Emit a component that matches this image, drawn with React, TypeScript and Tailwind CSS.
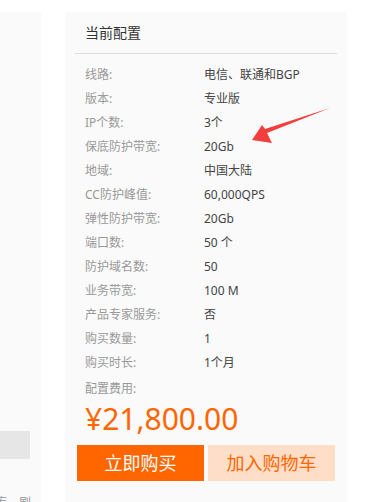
import React from "react";

const specs: { label: string; value: string }[] = [
  { label: "线路:", value: "电信、联通和BGP" },
  { label: "版本:", value: "专业版" },
  { label: "IP个数:", value: "3个" },
  { label: "保底防护带宽:", value: "20Gb" },
  { label: "地域:", value: "中国大陆" },
  { label: "CC防护峰值:", value: "60,000QPS" },
  { label: "弹性防护带宽:", value: "20Gb" },
  { label: "端口数:", value: "50 个" },
  { label: "防护域名数:", value: "50" },
  { label: "业务带宽:", value: "100 M" },
  { label: "产品专家服务:", value: "否" },
  { label: "购买数量:", value: "1" },
  { label: "购买时长:", value: "1个月" },
];

export default function App() {
  return (
    <div
      className="relative w-[382px] h-[502px] overflow-hidden bg-white flex gap-[24px] pt-[12px]"
      style={{ fontFamily: '"Noto Sans", "Noto Sans CJK SC", sans-serif' }}
    >
      {/* left column (cut off) */}
      <div className="w-[41px] shrink-0 bg-[#fafafa] flex flex-col overflow-hidden">
        <div className="shrink-0 mt-[419px] w-[30px] h-[28px] bg-[#e6e6e6]" />
        <div className="shrink-0 mt-[36px] -ml-[5px] whitespace-nowrap text-[12px] leading-[16px] text-[#999]">
          库，刷
        </div>
      </div>

      {/* order summary */}
      <div className="w-[282px] shrink-0 bg-[#fafafa] flex flex-col">
        <div className="px-[20px] pt-[10px] h-[41px] text-[14px] leading-[22px] text-[#333]">
          当前配置
        </div>
        <div className="mx-[10px] h-px bg-[#dddddd]" />

        <div className="mt-[9px] flex flex-col px-[20px]">
          {specs.map((s) => (
            <div key={s.label} className="flex h-[24px] items-center text-[12px]">
              <span className="w-[119px] text-[#999]">{s.label}</span>
              <span className="text-[#444]">{s.value}</span>
            </div>
          ))}
          <div className="mt-[2px] flex h-[24px] items-center text-[12px] text-[#999]">
            配置费用:
          </div>
          <div className="h-[36px] leading-[36px] text-[30px] text-[#ff6600]">
            ¥21,800.00
          </div>
        </div>

        <div className="mt-[8px] px-[12px] flex gap-[4px]">
          <button className="w-[127px] h-[36px] bg-[#ff6600] text-white text-[18px]">
            立即购买
          </button>
          <button className="w-[127px] h-[36px] bg-[#ffdec8] text-[#ff6600] text-[18px]">
            加入购物车
          </button>
        </div>
      </div>

      {/* annotation arrow */}
      <svg
        className="absolute left-0 top-0 pointer-events-none"
        width="382"
        height="502"
        viewBox="0 0 382 502"
      >
        <path
          d="M330 108 L267 133 L272 143 L252 140 L262 125 L265 129 Z"
          fill="#f43d3d"
        />
      </svg>
    </div>
  );
}
